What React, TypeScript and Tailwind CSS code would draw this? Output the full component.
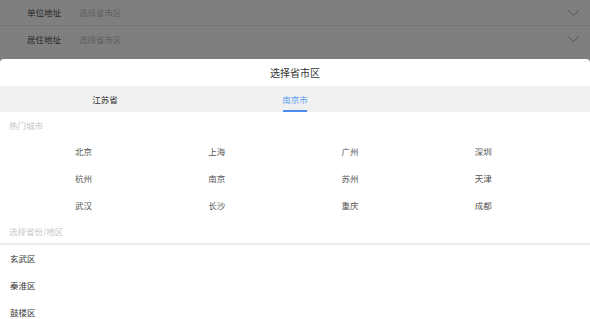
import React from 'react';

const hotCities = ['北京', '上海', '广州', '深圳', '杭州', '南京', '苏州', '天津', '武汉', '长沙', '重庆', '成都'];
const districts = ['玄武区', '秦淮区', '鼓楼区'];

const Chevron = () => (
  <svg width="13" height="8" viewBox="0 0 13 8" fill="none">
    <path d="M1 1.2L6.5 6.5L12 1.2" stroke="#555" strokeWidth="1" />
  </svg>
);

const FormRow: React.FC<{ label: string; last?: boolean }> = ({ label, last }) => (
  <div className={`h-[26px] flex items-center pl-[27px] pr-[10px] ${last ? '' : 'border-b border-[#747474]'}`}>
    <span className="text-[8.5px] text-[#262626] w-[52px]">{label}</span>
    <span className="text-[8.5px] text-[#5e5e5e] flex-1">选择省市区</span>
    <Chevron />
  </div>
);

const App: React.FC = () => {
  return (
    <div
      className="w-[590px] h-[319px] overflow-hidden flex flex-col bg-[#7f7f7f]"
      style={{ fontFamily: '"Noto Sans CJK SC", "Noto Sans", sans-serif' }}
    >
      {/* dimmed page behind the sheet */}
      <div className="h-[59px] shrink-0">
        <FormRow label="单位地址" />
        <FormRow label="居住地址" last />
      </div>

      {/* bottom sheet */}
      <div className="flex-1 bg-white rounded-t-[4px] overflow-hidden">
        <div className="h-[27px] flex items-center justify-center text-[10px] text-[#333]">选择省市区</div>

        <div className="h-[26px] bg-[#f0f0f0] flex">
          <div className="w-[210px] flex items-center justify-center text-[8.5px] text-[#333]">江苏省</div>
          <div className="w-[170px] relative flex items-center justify-center text-[8.5px] text-[#5b9ef5]">
            南京市
            <div className="absolute bottom-0 left-[73px] w-[24px] h-[2px] bg-[#4a8ef0]" />
          </div>
        </div>

        <div className="h-[26px] flex items-center px-[9px] text-[8.5px] text-[#c6c6c6]">热门城市</div>

        <div className="grid grid-cols-4 w-[550px] pl-[17px]">
          {hotCities.map((c) => (
            <div key={c} className="h-[27px] flex items-center justify-center text-[8.5px] text-[#555]">
              {c}
            </div>
          ))}
        </div>

        <div className="h-[26px] flex items-center px-[9px] text-[8.5px] text-[#c6c6c6] border-b-2 border-[#ececec]">
          选择省份/地区
        </div>

        {districts.map((d) => (
          <div key={d} className="h-[27px] flex items-center px-[10px] text-[8.5px] text-[#333]">
            {d}
          </div>
        ))}
      </div>
    </div>
  );
};

export default App;
